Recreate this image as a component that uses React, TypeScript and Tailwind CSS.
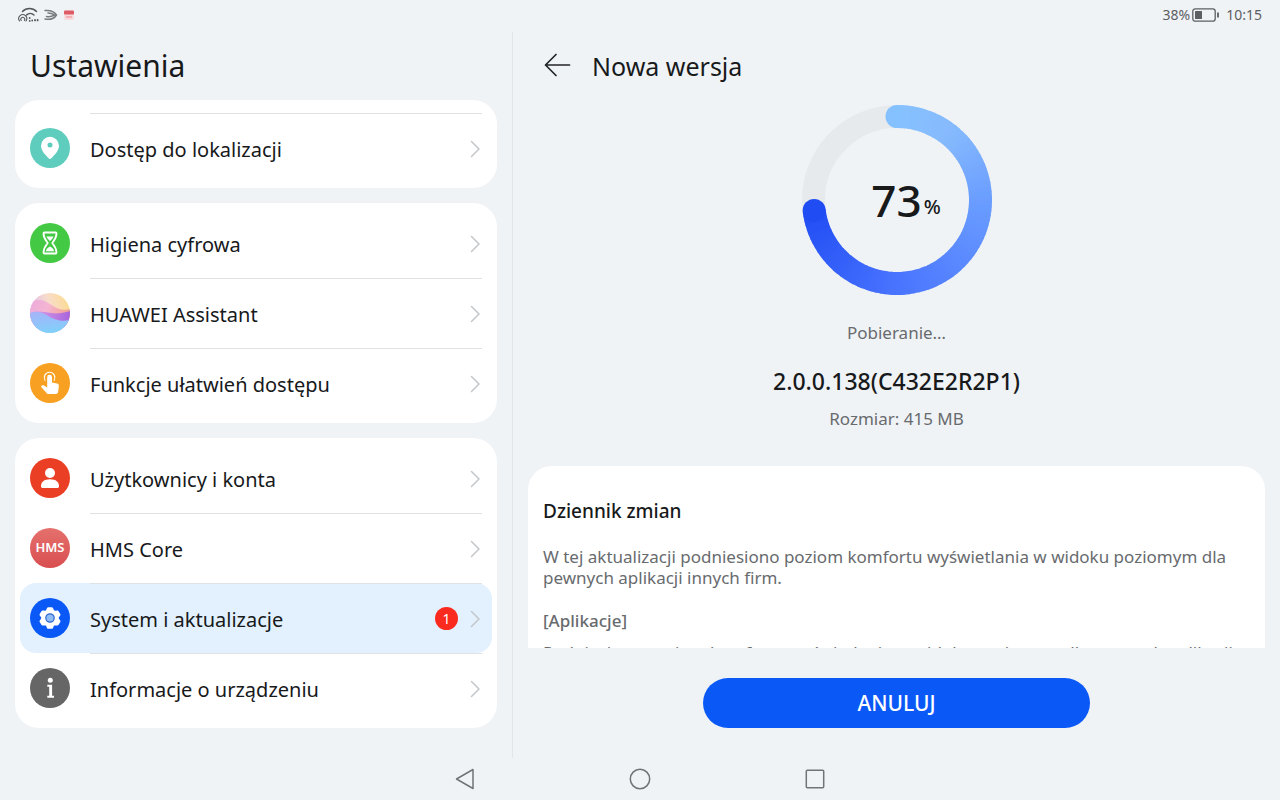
import type { ReactNode } from 'react';
import clsx from 'clsx';

type Item = {
  label: string;
  icon: ReactNode;
  active?: boolean;
  badge?: number;
};

const PROGRESS = 73;

function LocationIcon() {
  return (
    <svg viewBox="0 0 40 40" className="size-10" aria-hidden="true">
      <circle cx="20" cy="20" r="20" fill="#5ecdbd" />
      <path
        fillRule="evenodd"
        fill="#fff"
        d="M20 8.8a9 9 0 0 0-9 9c0 5 4.6 9.200 7.600 12.500a1.900 1.900 0 0 0 2.800 0C24.400 27 29 22.800 29 17.800a9 9 0 0 0-9-9Zm0 5.700a2.500 2.500 0 1 1 0 5 2.500 2.500 0 0 1 0-5Z"
      />
    </svg>
  );
}

function HourglassIcon() {
  return (
    <svg viewBox="0 0 40 40" className="size-10" aria-hidden="true">
      <circle cx="20" cy="20" r="20" fill="#44c944" />
      <g fill="none" stroke="#fff" strokeWidth="1.8" strokeLinejoin="round" strokeLinecap="round">
        <path d="M14.500 9.500h11a1 1 0 0 1 1 1c0 4.500-2.200 6.800-4.200 9.500 2 2.700 4.200 5 4.200 9.500a1 1 0 0 1-1 1h-11a1 1 0 0 1-1-1c0-4.500 2.200-6.800 4.200-9.500-2-2.700-4.200-5-4.200-9.500a1 1 0 0 1 1-1Z" />
      </g>
      <path fill="#fff" d="M16.500 13.500h7c-.5 1.600-2 3.200-3.500 4.500-1.500-1.300-3-2.900-3.500-4.500ZM20 23.500c2.300 1.300 3.700 2.700 4.200 4.700h-8.400c.5-2 1.900-3.400 4.200-4.700Z" />
    </svg>
  );
}

function AssistantIcon() {
  return (
    <svg viewBox="0 0 40 40" className="size-10" aria-hidden="true">
      <defs>
        <clipPath id="orb">
          <circle cx="20" cy="20" r="20" />
        </clipPath>
        <linearGradient id="orb-top" x1="0" y1="0.5" x2="1" y2="0.2">
          <stop offset="0" stopColor="#dcb6ee" />
          <stop offset="0.5" stopColor="#f8dccb" />
          <stop offset="1" stopColor="#fbdb8f" />
        </linearGradient>
        <linearGradient id="orb-pink" x1="0" y1="0" x2="1" y2="0.3">
          <stop offset="0" stopColor="#eba9dc" />
          <stop offset="0.5" stopColor="#f5b5d2" />
          <stop offset="1" stopColor="#f2a293" />
        </linearGradient>
        <linearGradient id="orb-violet" x1="0" y1="0" x2="1" y2="0">
          <stop offset="0" stopColor="#e0a3ea" />
          <stop offset="1" stopColor="#a765dc" />
        </linearGradient>
        <linearGradient id="orb-blue" x1="0.3" y1="0" x2="0.5" y2="1">
          <stop offset="0" stopColor="#a5b4f8" />
          <stop offset="1" stopColor="#7fd1fb" />
        </linearGradient>
      </defs>
      <g clipPath="url(#orb)">
        <rect width="40" height="40" fill="url(#orb-top)" />
        <path fill="url(#orb-pink)" d="M0 9c7-3 13-3 20 2 7 5 13 7 20 5v14H0Z" />
        <path fill="url(#orb-violet)" d="M0 20c8-3 14-1 21 0 7 1 12 0 19-2v16H0Z" />
        <path fill="url(#orb-blue)" d="M0 20c8-3 14 0 19 3.500 7 4 14 5.500 21 3V40H0Z" />
      </g>
    </svg>
  );
}

function TouchIcon() {
  return (
    <svg viewBox="0 0 40 40" className="size-10" aria-hidden="true">
      <circle cx="20" cy="20" r="20" fill="#f8a021" />
      <path
        fill="#fff"
        d="M17.200 14.200a2.400 2.400 0 0 1 4.800 0v5.300l5 1c1.300.3 2.100 1.300 1.900 2.600l-.8 6c-.2 1.200-1 2-2.200 2h-7.200c-.8 0-1.400-.3-1.900-.9l-5.200-5.600c-.6-.8-.4-1.600.3-2 .7-.5 1.700-.4 2.500.1l2.800 1.700Z"
      />
      <path
        fill="none"
        stroke="#fff"
        strokeWidth="1.200"
        strokeLinecap="round"
        d="M15 17.200a5.300 5.300 0 1 1 9.200 0"
      />
    </svg>
  );
}

function UserIcon() {
  return (
    <svg viewBox="0 0 40 40" className="size-10" aria-hidden="true">
      <circle cx="20" cy="20" r="20" fill="#ea3f25" />
      <circle cx="20" cy="15" r="5" fill="#fff" />
      <path fill="#fff" d="M11 28.200c0-4.200 3-7 9-7s9 2.800 9 7c0 1-.7 1.800-1.800 1.800H12.800c-1.100 0-1.800-.8-1.800-1.800Z" />
    </svg>
  );
}

function HmsIcon() {
  return (
    <span className="flex size-10 items-center justify-center rounded-full bg-linear-to-b from-[#e4706c] to-[#d94e50] text-[13px] font-semibold text-white">
      HMS
    </span>
  );
}

function GearIcon() {
  return (
    <svg viewBox="0 0 40 40" className="size-10" aria-hidden="true">
      <circle cx="20" cy="20" r="20" fill="#0a59f7" />
      <path
        fill="#fff"
        stroke="#fff"
        strokeWidth="2.800"
        strokeLinejoin="round"
        d="M18.300 10.600h3.400l1.100 2.500 1.900 1.100 2.700-.3 1.700 2.900-1.600 2.200v2l1.600 2.200-1.700 2.900-2.700-.3-1.900 1.100-1.100 2.500h-3.400l-1.100-2.500-1.900-1.100-2.700.3-1.700-2.900 1.600-2.200v-2l-1.600-2.200 1.700-2.900 2.700.3 1.900-1.100Z"
      />
      <circle cx="20" cy="20" r="4.200" fill="#8fbcf5" stroke="#2c66cf" strokeWidth="1.200" />
    </svg>
  );
}

function InfoIcon() {
  return (
    <svg viewBox="0 0 40 40" className="size-10" aria-hidden="true">
      <circle cx="20" cy="20" r="20" fill="#666" />
      <circle cx="20.300" cy="12.300" r="2.500" fill="#fff" />
      <path fill="#fff" d="M17.300 16.700h4.800V27.800h1.900v2H17.300v-2h1.900v-9.100h-1.900Z" />
    </svg>
  );
}

function Chevron() {
  return (
    <svg viewBox="0 0 10 18" className="h-[18px] w-[10px]" fill="none" stroke="#c3c7ca" strokeWidth="1.500" strokeLinecap="round" strokeLinejoin="round" aria-hidden="true">
      <path d="m1.500 1.500 7.500 7.500-7.500 7.500" />
    </svg>
  );
}

const groups: Item[][] = [
  [
    { label: 'Higiena cyfrowa', icon: <HourglassIcon /> },
    { label: 'HUAWEI Assistant', icon: <AssistantIcon /> },
    { label: 'Funkcje ułatwień dostępu', icon: <TouchIcon /> },
  ],
  [
    { label: 'Użytkownicy i konta', icon: <UserIcon /> },
    { label: 'HMS Core', icon: <HmsIcon /> },
    { label: 'System i aktualizacje', icon: <GearIcon />, active: true, badge: 1 },
    { label: 'Informacje o urządzeniu', icon: <InfoIcon /> },
  ],
];

function SettingsRow({ item, divider }: { item: Item; divider: boolean }) {
  return (
    <li className="px-[5px]">
      <a
        href="#"
        aria-current={item.active ? 'page' : undefined}
        className={clsx('flex h-[70px] gap-5 rounded-2xl px-[10px]', item.active && 'bg-[#e2f1fd]')}
      >
        <span className="flex shrink-0 items-center">{item.icon}</span>
        <span className={clsx('flex flex-1 items-center border-t', divider ? 'border-[#dfe2e4]' : 'border-transparent')}>
          <span className="flex-1 pt-0.5 text-xl">{item.label}</span>
          {item.badge && (
            <span className="mr-3 flex size-[23px] items-center justify-center rounded-full bg-[#fa2a1e] text-sm text-white">
              {item.badge}
            </span>
          )}
          <Chevron />
          <span className="w-[2px]" />
        </span>
      </a>
    </li>
  );
}

function StatusBar() {
  return (
    <header className="flex h-8 shrink-0 items-center justify-between px-[18px] pb-0.5 text-sm text-[#5c6063]">
      <div className="flex items-center gap-1">
        <svg viewBox="0 0 22 16" className="h-4 w-[22px]" fill="none" stroke="#54585b" strokeLinecap="round" aria-hidden="true">
          <path strokeWidth="1.500" d="M4.500 4.500a9.500 9.500 0 0 1 14 0" />
          <path strokeWidth="1.500" d="M8.500 8a5.500 5.500 0 0 1 7.500 0" />
          <path strokeWidth="1.100" d="M1.500 14a4 4 0 1 1 6.500 0M3.200 13.500a2 2 0 1 1 3.200 0" />
          <path strokeWidth="1.800" d="M11.700 11v.1M11.700 13.800v.1M14.200 13.500v.1M17 13v.4M19.600 12.800v.6" />
        </svg>
        <svg viewBox="0 0 14 12" className="h-3 w-[14px]" fill="none" stroke="#777b7e" strokeWidth="1.500" strokeLinecap="round" strokeLinejoin="round" aria-hidden="true">
          <path d="M1 1.500c5-.5 9 .5 11.500 4.500C10 10 6 11 1 10M4 4c2.500 0 4.500.5 6.500 2C8 7.500 5 8 2.500 7.500" />
        </svg>
        <svg viewBox="0 0 14 12" className="h-3 w-[14px]" aria-hidden="true">
          <rect x="2" y="1.500" width="10" height="9.500" rx="2" fill="#f8d9dc" />
          <rect x="2" y="1.500" width="10" height="4" rx="1" fill="#de5b66" />
          <path d="M4 8h6" stroke="#f2a2a8" strokeWidth="1.500" />
        </svg>
      </div>
      <div className="flex items-center">
        <span>38%</span>
        <svg viewBox="0 0 28 14" className="mr-1.5 ml-0.5 h-[14px] w-7" aria-hidden="true">
          <rect x="0.800" y="0.800" width="22.400" height="12.400" rx="2.500" fill="none" stroke="#5c6063" strokeWidth="1.300" />
          <rect x="3" y="3" width="7" height="8" rx="0.500" fill="#5c6063" />
          <path d="M26 4.500v5" stroke="#5c6063" strokeWidth="1.800" />
        </svg>
        <span>10:15</span>
      </div>
    </header>
  );
}

const STOPS = [
  { at: 0, rgb: [134, 193, 255] },
  { at: 0.14, rgb: [134, 186, 253] },
  { at: 0.34, rgb: [106, 157, 255] },
  { at: 0.68, rgb: [73, 116, 255] },
  { at: 1, rgb: [32, 76, 244] },
];

function colourAt(t: number) {
  const i = Math.max(1, STOPS.findIndex((stop) => stop.at >= t));
  const a = STOPS[i - 1];
  const b = STOPS[i];
  const k = (t - a.at) / (b.at - a.at);
  return `rgb(${a.rgb.map((c, n) => Math.round(c + (b.rgb[n] - c) * k)).join(' ')})`;
}

function pointAt(degrees: number) {
  const angle = ((degrees - 90) * Math.PI) / 180;
  return [95 + 83.5 * Math.cos(angle), 95 + 83.5 * Math.sin(angle)];
}

function ProgressRing({ value }: { value: number }) {
  const sweep = value * 3.6;
  const count = 90;
  const [endX, endY] = pointAt(sweep);

  return (
    <div className="relative flex size-[190px] items-center justify-center">
      <svg viewBox="0 0 190 190" className="absolute inset-0 size-full" fill="none" aria-hidden="true">
        <circle cx="95" cy="95" r="83.500" stroke="#e7eaec" strokeWidth="23" />
        <circle cx="95" cy="11.500" r="11.500" fill={colourAt(0)} />
        {Array.from({ length: count }, (_, i) => {
          const [x1, y1] = pointAt((sweep * i) / count);
          const [x2, y2] = pointAt(Math.min(sweep, (sweep * (i + 1)) / count + 0.5));
          return (
            <path
              key={i}
              d={`M${x1} ${y1}A83.500 83.500 0 0 1 ${x2} ${y2}`}
              stroke={colourAt(i / count)}
              strokeWidth="23"
            />
          );
        })}
        <circle cx={endX} cy={endY} r="11.500" fill={colourAt(1)} />
      </svg>
      <p className="relative text-[44px] font-medium text-[#17191b]">
        {value}
        <span className="absolute bottom-3 left-full ml-0.5 text-xl">%</span>
      </p>
    </div>
  );
}

export default function App() {
  return (
    <div className="flex h-screen flex-col overflow-hidden bg-[#f0f3f6] font-['Noto_Sans',sans-serif] text-[#17191b]">
      <StatusBar />

      <main className="flex min-h-0 flex-1">
        <nav className="w-2/5 overflow-hidden px-[15px]" aria-label="Ustawienia">
          <h1 className="flex h-[68px] items-center px-[15px] text-3xl">Ustawienia</h1>
          <div className="flex flex-col gap-[15px]">
            <ul className="rounded-3xl bg-white pt-[13px] pb-[5px]">
              <SettingsRow item={{ label: 'Dostęp do lokalizacji', icon: <LocationIcon /> }} divider />
            </ul>
            {groups.map((group, g) => (
              <ul key={g} className="rounded-3xl bg-white py-[5px]">
                {group.map((item, i) => (
                  <SettingsRow key={item.label} item={item} divider={i > 0} />
                ))}
              </ul>
            ))}
          </div>
        </nav>

        <section className="flex flex-1 flex-col border-l border-[#e2e6e9] px-[15px]">
          <div className="flex h-[73px] shrink-0 items-center gap-5 px-4 pb-1">
            <button aria-label="Wstecz" className="mb-1">
              <svg viewBox="0 0 28 24" className="h-6 w-7" fill="none" stroke="#222527" strokeWidth="1.700" strokeLinecap="round" strokeLinejoin="round">
                <path d="M12 1.500 1.500 12 12 22.500M1.500 12h24" />
              </svg>
            </button>
            <h2 className="text-[25px]">Nowa wersja</h2>
          </div>

          <div className="flex shrink-0 flex-col items-center pb-[35px]">
            <ProgressRing value={PROGRESS} />
            <p className="mt-[26px] text-[17px] leading-6 text-[#686b6e]">Pobieranie…</p>
            <p className="mt-[22px] text-[23px] leading-7 font-medium">2.0.0.138(C432E2R2P1)</p>
            <p className="mt-3 text-[17px] leading-6 text-[#686b6e]">Rozmiar: 415 MB</p>
          </div>

          <article className="min-h-0 flex-1 overflow-hidden rounded-t-3xl bg-white px-[15px] pt-[30px] text-[17px] leading-[21px] text-[#686b6e]">
            <h3 className="text-[19px] leading-[30px] font-medium text-[#17191b]">Dziennik zmian</h3>
            <p className="mt-5">
              W tej aktualizacji podniesiono poziom komfortu wyświetlania w widoku poziomym dla pewnych aplikacji innych firm.
            </p>
            <h4 className="mt-[22px] font-medium">[Aplikacje]</h4>
            <p className="mt-[11px]">
              Podniesiono poziom komfortu wyświetlania w widoku poziomym dla pewnych aplikacji innych firm.
            </p>
          </article>

          <div className="flex shrink-0 justify-center py-[30px]">
            <button className="h-[50px] w-[387px] rounded-full bg-[#0a59f7] pt-0.5 text-[21px] font-medium text-white">ANULUJ</button>
          </div>
        </section>
      </main>

      <footer className="flex h-[42px] shrink-0 items-center justify-center gap-[151px]">
        <button aria-label="Cofnij">
          <svg viewBox="0 0 24 24" className="size-6" fill="none" stroke="#707477" strokeWidth="1.500" strokeLinejoin="round">
            <path d="M20 2.500v19L3.500 12Z" />
          </svg>
        </button>
        <button aria-label="Ekran główny">
          <svg viewBox="0 0 24 24" className="size-6" fill="none" stroke="#707477" strokeWidth="1.500">
            <circle cx="12" cy="12" r="9.700" />
          </svg>
        </button>
        <button aria-label="Ostatnie">
          <svg viewBox="0 0 24 24" className="size-6" fill="none" stroke="#707477" strokeWidth="1.500">
            <rect x="3.300" y="3.300" width="17.400" height="17.400" rx="1" />
          </svg>
        </button>
      </footer>
    </div>
  );
}
